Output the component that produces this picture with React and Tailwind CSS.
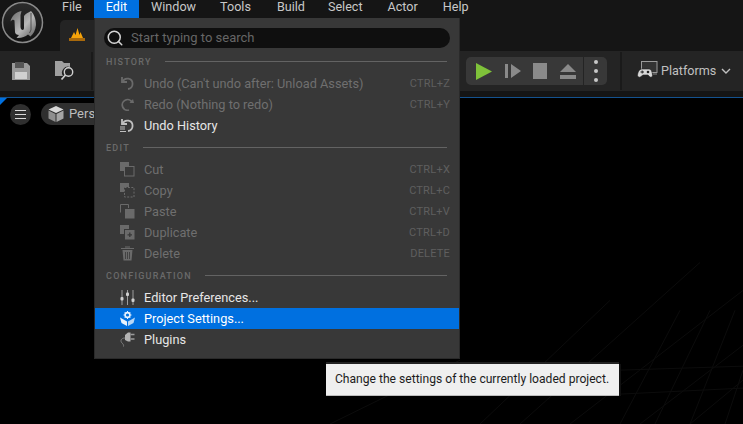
import { Search } from 'lucide-react';

const menus = [
  { name: 'File', pad: 'pr-[12px]' },
  { name: 'Edit', pad: 'pr-[12px]' },
  { name: 'Window', pad: 'pr-[12px]' },
  { name: 'Tools', pad: 'pr-[14px]' },
  { name: 'Build', pad: 'pr-[11px]' },
  { name: 'Select', pad: 'pr-[13px]' },
  { name: 'Actor', pad: 'pr-[13px]' },
  { name: 'Help', pad: 'pr-[12px]' },
];

function Logo() {
  return (
    <svg width="44" height="44" viewBox="0 0 44 44" className="shrink-0">
      <defs>
        <linearGradient id="ue" x1="0" y1="0" x2="0" y2="1">
          <stop offset="0" stopColor="#2c2c2c" />
          <stop offset="1" stopColor="#121212" />
        </linearGradient>
        <linearGradient id="ueg" x1="0" y1="0" x2="1" y2="1">
          <stop offset="0" stopColor="#6a6a6a" />
          <stop offset="0.55" stopColor="#b8b8b8" />
          <stop offset="1" stopColor="#5a5a5a" />
        </linearGradient>
      </defs>
      <circle cx="21.5" cy="21.5" r="20" fill="url(#ue)" stroke="#8a8a8a" strokeWidth="1.5" />
      <path d="M20.5 10 C15 11 10.5 15 9.5 20.5 C11 18.5 12.5 18 13.5 19.5 L14 31 C14 33 16 34 18 34 L15.5 37 C20 37.5 24 36 27 33.5 L29.5 35.5 C32.5 33 34.5 29 35 24 C35 18 33 13 30 10 C27 11.5 24.5 13 23 15 V27 C23 29 21.5 29.5 20.5 28.5 C19.5 27.5 19.5 26 19.5 25 V14 Z" fill="url(#ueg)" />
      <path d="M30 12 V29 L28.5 32" fill="none" stroke="#3a3a3a" strokeWidth="0.8" />
    </svg>
  );
}

function TabIcon() {
  return (
    <svg width="18" height="16" viewBox="0 0 18 16">
      <path d="M3 11 L6 5 L7.5 8 L9.5 1 L11.5 8 L12.5 5 L15 11 Z" fill="#f5a30a" />
      <rect x="1" y="11" width="16" height="3" fill="#a8690c" />
    </svg>
  );
}

function SaveIcon() {
  return (
    <svg width="18" height="18" viewBox="0 0 18 18">
      <path d="M0 1 H15 L18 4 V18 H0 Z" fill="#9a9a9a" />
      <rect x="3" y="0" width="9" height="6" fill="#555" />
      <rect x="3" y="10" width="12" height="7" fill="#d0d0d0" />
    </svg>
  );
}

function BrowseIcon() {
  return (
    <svg width="20" height="20" viewBox="0 0 20 20">
      <path d="M0 0 H7 L9 2 H15 V6 A6 6 0 0 0 8 15 H0 Z" fill="#a0a0a0" />
      <circle cx="13.5" cy="11" r="4.2" fill="none" stroke="#d0d0d0" strokeWidth="1.4" />
      <path d="M10.5 14 L6.5 18.5" stroke="#d0d0d0" strokeWidth="1.8" />
    </svg>
  );
}

function UndoIcon({ color, lines }) {
  return (
    <svg width="15" height="15" viewBox="0 0 15 15">
      <path d="M2 1 V6 H7" fill="none" stroke={color} strokeWidth="1.8" />
      <path d="M2.5 6 A5.2 5.2 0 1 1 8 13" fill="none" stroke={color} strokeWidth="1.8" />
      {lines && <path d="M0 9 H5 M0 11 H5 M0 13.5 H6" stroke={color} strokeWidth="1.2" />}
    </svg>
  );
}

function RedoIcon({ color }) {
  return (
    <svg width="15" height="15" viewBox="0 0 15 15">
      <path d="M14 6 H9.5 L13 2 Z" fill={color} />
      <path d="M12 5 A5.3 5.3 0 1 0 9 13" fill="none" stroke={color} strokeWidth="1.8" />
    </svg>
  );
}

function CutIcon({ c }) {
  return (
    <svg width="15" height="15" viewBox="0 0 15 15">
      <path d="M0 0 H9 V4 H4 V9 H0 Z" fill={c} />
      <rect x="4.5" y="4.5" width="9.5" height="9.5" fill="none" stroke={c} strokeWidth="1" />
    </svg>
  );
}

function CopyIcon({ c }) {
  return (
    <svg width="15" height="15" viewBox="0 0 15 15">
      <path d="M0 0 H9 V4 H4 V9 H0 Z" fill={c} />
      <rect x="4.5" y="4.5" width="9.5" height="9.5" fill="none" stroke={c} strokeWidth="1" strokeDasharray="2 1.4" />
    </svg>
  );
}

function PasteIcon({ c }) {
  return (
    <svg width="15" height="15" viewBox="0 0 15 15">
      <path d="M0.5 8.5 V0.5 H8.5 V4" fill="none" stroke={c} strokeWidth="1" />
      <rect x="5" y="5" width="9.5" height="9.5" fill={c} />
    </svg>
  );
}

function DuplicateIcon({ c }) {
  return (
    <svg width="15" height="15" viewBox="0 0 15 15">
      <path d="M0 0 H9 V4 H4 V9 H0 Z" fill={c} />
      <rect x="5" y="5" width="9.5" height="9.5" fill={c} />
      <path d="M7.5 9.8 H12 M9.8 7.5 V12" stroke="#383838" strokeWidth="1.3" />
    </svg>
  );
}

function DeleteIcon({ c }) {
  return (
    <svg width="15" height="15" viewBox="0 0 15 15">
      <path d="M1 2.5 H14 M5 1 H10" stroke={c} strokeWidth="1.2" />
      <path d="M2.5 4 H12.5 L11.5 14.5 H3.5 Z" fill={c} />
      <path d="M5.5 6 V13 M7.5 6 V13 M9.5 6 V13" stroke="#383838" strokeWidth="0.8" />
    </svg>
  );
}

function SlidersIcon() {
  return (
    <svg width="15" height="15" viewBox="0 0 15 15">
      <path d="M2 0 V15 M7.5 0 V15 M13 0 V15" stroke="#9c9c9c" strokeWidth="1" />
      <rect x="0.5" y="7" width="3" height="3.5" rx="1" fill="#d0d0d0" />
      <rect x="6" y="2.5" width="3" height="3.5" rx="1" fill="#d0d0d0" />
      <rect x="11.5" y="8.5" width="3" height="3.5" rx="1" fill="#d0d0d0" />
    </svg>
  );
}

function SettingsIcon() {
  return (
    <svg width="15" height="15" viewBox="0 0 15 15">
      <path d="M0 6.5 L7 10.5 V15 L1.5 12 Z" fill="#e8f2fd" />
      <path d="M15 6.5 L8 10.5 V15 L13.5 12 Z" fill="#b7d6f6" />
      <circle cx="7.5" cy="4" r="2.4" fill="none" stroke="#e8f2fd" strokeWidth="1.6" />
      <path d="M7.5 0 V1.2 M7.5 6.8 V8 M3.5 4 H4.8 M10.2 4 H11.5 M4.8 1.3 L5.7 2.2 M10.2 1.3 L9.3 2.2 M4.8 6.7 L5.7 5.8 M10.2 6.7 L9.3 5.8" stroke="#e8f2fd" strokeWidth="1" />
    </svg>
  );
}

function PluginIcon() {
  return (
    <svg width="15" height="15" viewBox="0 0 15 15">
      <path d="M8 0.5 H10.5 V9.5 H8 L5 8 V3 Z" fill="#b4b4b4" />
      <path d="M10.5 2.5 H14.5 M10.5 7 H14.5" stroke="#9a9a9a" strokeWidth="1.6" />
      <path d="M5 6 C1 6 0 9 2 11 C3 12 4 13 3.5 14.5" fill="none" stroke="#808080" strokeWidth="1" />
    </svg>
  );
}

function MenuRow({ icon: Icon, label, shortcut, off, active, iconProps }) {
  const c = off ? '#6a6a6a' : '#c0c0c0';
  return (
    <div className={`h-[21px] flex items-center pl-[25px] pr-[9px] ${active ? 'bg-[#0070e0]' : ''}`}>
      <div className="w-[24px] shrink-0 flex">
        <Icon c={c} color={c} {...iconProps} />
      </div>
      <span className={`text-[12.75px] flex-1 ${off ? 'text-[#6f6f6f]' : active ? 'text-white' : 'text-[#e6e6e6]'}`}>{label}</span>
      {shortcut && <span className="mt-[2px] text-[11px] tracking-[0.2px] text-[#5f5f5f]">{shortcut}</span>}
    </div>
  );
}

function Section({ title }) {
  return (
    <div className="h-[23px] flex items-center pl-[11px] pr-[12px] gap-[13px]">
      <span className="mt-[2px] text-[9px] font-medium tracking-[1.25px] text-[#6a6a6a]">{title}</span>
      <div className="flex-1 h-px bg-[#636363]" />
    </div>
  );
}

function EditMenu() {
  return (
    <div className="absolute left-[94px] top-[18px] w-[366px] h-[341px] bg-[#383838] border border-[#2a2a2a] border-t-0 pt-[10px]">
      <div className="mx-[9px] h-[20px] rounded-full bg-[#0f0f0f] flex items-center pl-[2px] gap-[7px]">
        <Search size={18} strokeWidth={2} className="text-[#d5d5d5]" />
        <span className="text-[13px] text-[#666666]">Start typing to search</span>
      </div>
      <div className="mt-[2px]">
        <Section title="HISTORY" />
        <MenuRow icon={UndoIcon} label="Undo (Can't undo after: Unload Assets)" shortcut="CTRL+Z" off />
        <MenuRow icon={RedoIcon} label="Redo (Nothing to redo)" shortcut="CTRL+Y" off />
        <MenuRow icon={UndoIcon} iconProps={{ lines: true }} label="Undo History" />
        <Section title="EDIT" />
        <MenuRow icon={CutIcon} label="Cut" shortcut="CTRL+X" off />
        <MenuRow icon={CopyIcon} label="Copy" shortcut="CTRL+C" off />
        <MenuRow icon={PasteIcon} label="Paste" shortcut="CTRL+V" off />
        <MenuRow icon={DuplicateIcon} label="Duplicate" shortcut="CTRL+D" off />
        <MenuRow icon={DeleteIcon} label="Delete" shortcut="DELETE" off />
        <Section title="CONFIGURATION" />
        <MenuRow icon={SlidersIcon} label="Editor Preferences..." />
        <MenuRow icon={SettingsIcon} label="Project Settings..." active />
        <MenuRow icon={PluginIcon} label="Plugins" />
      </div>
    </div>
  );
}

function PlayControls() {
  return (
    <div className="h-[28px] w-[141px] rounded-[5px] bg-[#383838] flex items-center">
      <div className="w-[118px] h-full flex items-center pl-[10px] border-r border-[#242424]">
        <svg width="16" height="17" viewBox="0 0 16 17"><path d="M0 0 L16 8.5 L0 17 Z" fill="#7fc23a" /></svg>
        <svg className="ml-[13px]" width="16" height="14" viewBox="0 0 16 14"><path d="M0 0 H3 V14 H0 Z M6 0 L16 7 L6 14 Z" fill="#8a8a8a" /></svg>
        <svg className="ml-[12px]" width="14" height="16" viewBox="0 0 14 16"><rect width="14" height="16" fill="#8a8a8a" /></svg>
        <svg className="ml-[13px]" width="16" height="15" viewBox="0 0 16 15"><path d="M8 0 L16 8 H0 Z M0 11 H16 V15 H0 Z" fill="#8a8a8a" /></svg>
      </div>
      <div className="flex-1 flex flex-col items-center gap-[5px]">
        <div className="w-[4px] h-[4px] rounded-full bg-[#c8c8c8]" />
        <div className="w-[4px] h-[4px] rounded-full bg-[#c8c8c8]" />
        <div className="w-[4px] h-[4px] rounded-full bg-[#c8c8c8]" />
      </div>
    </div>
  );
}

function PlatformsIcon() {
  return (
    <svg width="21" height="20" viewBox="0 0 21 20">
      <rect x="4.5" y="0.5" width="15.5" height="11" fill="#333" stroke="#9a9a9a" strokeWidth="1" />
      <path d="M5 8 H12 C14 8 15 10 15.5 14 C15.5 16 14 17 12.5 15.5 L11 14 H6 L4 15.5 C2.5 17 0.5 16 0.5 14 C1 10 3 8 5 8 Z" fill="#d8d8d8" stroke="#242424" strokeWidth="0.6" />
      <circle cx="11" cy="11" r="1.3" fill="#242424" />
      <path d="M3.5 11 H7 M5.2 9.5 V12.5" stroke="#242424" strokeWidth="1" />
      <path d="M16 13 H20" stroke="#8a8a8a" strokeWidth="1" />
    </svg>
  );
}

function Viewport() {
  const lines = [
    'M480 424 L610 300', 'M520 424 L700 262', 'M570 424 L743 290', 'M640 424 L743 345',
    'M690 424 L743 380', 'M620 424 L680 310', 'M655 424 L710 310', 'M690 424 L735 310',
    'M725 424 L743 370', 'M330 424 L460 360', 'M600 395 L743 388', 'M620 370 L743 366',
  ];
  return (
    <div className="relative flex-1 bg-black border-t border-[#14528f] overflow-hidden">
      <svg className="absolute inset-0 w-full h-full" viewBox="0 97 743 327" preserveAspectRatio="none">
        {lines.map((d, i) => <path key={i} d={d} stroke="#0c0c0c" strokeWidth="1" fill="none" />)}
      </svg>
      <div className="absolute left-0 top-0 w-0 h-0 border-t-[7px] border-t-[#0070e0] border-r-[7px] border-r-transparent" />
      <div className="relative flex items-center gap-[10px] pl-[10px] pt-[5px]">
        <div className="w-[21px] h-[21px] rounded-full bg-[#2f2f2f] flex flex-col items-center justify-center gap-[3px]">
          <div className="w-[11px] h-px bg-[#d8d8d8]" />
          <div className="w-[11px] h-px bg-[#d8d8d8]" />
          <div className="w-[11px] h-px bg-[#d8d8d8]" />
        </div>
        <div className="h-[22px] w-[120px] rounded-full bg-[#2f2f2f] flex items-center pl-[7px] gap-[5px]">
          <svg width="16" height="16" viewBox="0 0 16 16">
            <path d="M8 0 L15.5 3.5 L8 7 L0.5 3.5 Z" fill="#d8d8d8" />
            <path d="M0.5 4.5 L7.5 8 V16 L0.5 12.5 Z" fill="#8f8f8f" />
            <path d="M15.5 4.5 L8.5 8 V16 L15.5 12.5 Z" fill="#a5a5a5" />
          </svg>
          <span className="text-[13px] text-[#bdbdbd]">Persistent Level</span>
        </div>
      </div>
    </div>
  );
}

export default function App() {
  return (
    <div className="relative w-screen h-screen overflow-hidden flex flex-col bg-black text-[#c8c8c8] font-['Roboto',sans-serif]">
      <div className="h-[51px] bg-[#151515] flex pl-[1px] shrink-0">
        <div className="pt-[1px]"><Logo /></div>
        <div className="flex-1 pl-[5px] flex flex-col">
          <div className="h-[18px] flex text-[12.6px] leading-[14px]">
            {menus.map(m => (
              <div key={m.name} className={`pl-[12px] ${m.pad} ${m.name === 'Edit' ? 'bg-[#0070e0] text-white' : 'text-[#c8c8c8]'}`}>{m.name}</div>
            ))}
          </div>
          <div className="mt-[2px] ml-[10px] w-[60px] flex-1 bg-[#242424] rounded-tl-[5px] pl-[8px] pt-[7px]">
            <TabIcon />
          </div>
        </div>
      </div>
      <div className="h-[40px] bg-[#242424] shrink-0 flex items-center pl-[12px]">
        <SaveIcon />
        <div className="ml-[25px]"><BrowseIcon /></div>
        <div className="ml-[16px] w-[2px] h-[38px] bg-[#1a1a1a]" />
        <div className="ml-[373px]"><PlayControls /></div>
        <div className="ml-[13px] w-[2px] h-[38px] bg-[#1a1a1a]" />
        <div className="ml-[15px]"><PlatformsIcon /></div>
        <span className="ml-[3px] text-[12.6px] text-[#c0c0c0]">Platforms</span>
        <svg className="ml-[5px]" width="10" height="6" viewBox="0 0 10 6"><path d="M1 1 L5 5 L9 1" fill="none" stroke="#c0c0c0" strokeWidth="1.4" /></svg>
      </div>
      <div className="h-[6px] bg-[#151515] shrink-0" />
      <Viewport />
      <EditMenu />
      <div className="absolute left-[326px] top-[364px] w-[293px] h-[32px] bg-[#efefef] border-b border-[#bdbdbd] shadow-[0_-2px_0_#222,2px_0_0_#111] flex items-center pl-[9px] text-[12.1px] text-[#1c1c1c]">
        Change the settings of the currently loaded project.
      </div>
    </div>
  );
}
